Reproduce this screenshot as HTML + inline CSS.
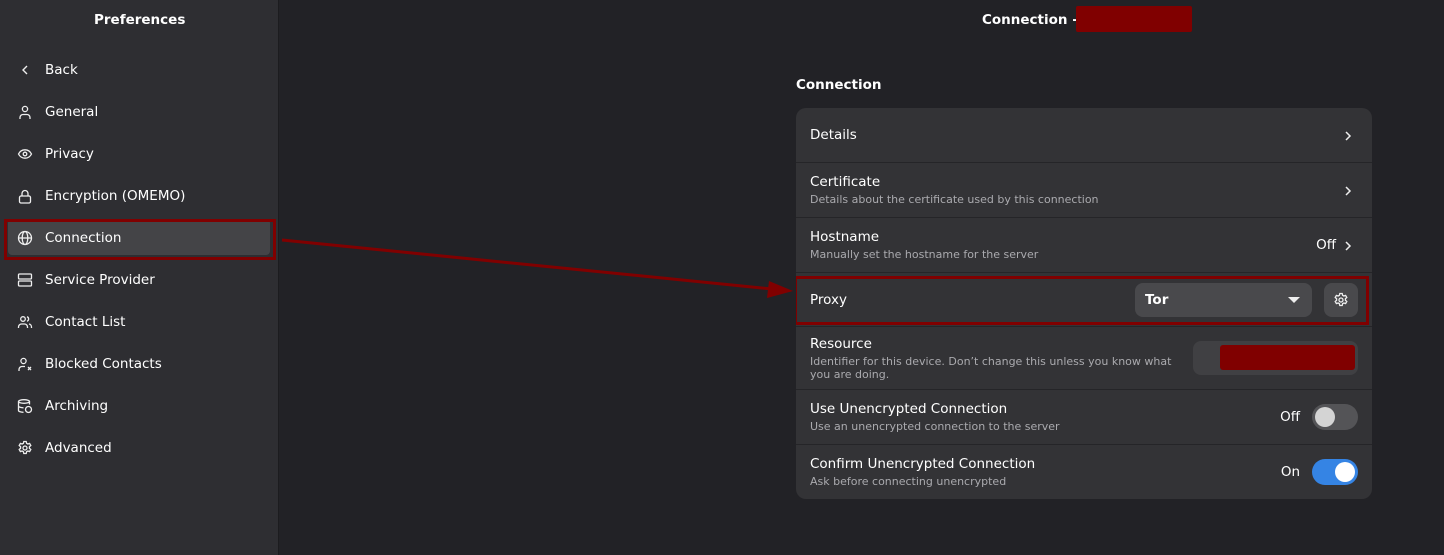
<!DOCTYPE html><html><head><style>
body{margin:0;width:1444px;height:555px;background:#222226;font-family:"DejaVu Sans","Liberation Sans",sans-serif;color:#fff;position:relative;overflow:hidden}
.side{position:absolute;left:0;top:0;width:278px;height:555px;background:#2e2e32;border-right:1px solid #1c1c1f}
.title{position:absolute;top:12px;font-weight:bold;font-size:13.5px}
.item{position:absolute;left:8px;width:262px;height:36px;font-size:13.5px;line-height:38px}
.item svg{position:absolute;left:9px;top:11px}
.item span{position:absolute;left:37px}
.card{position:absolute;left:796px;top:108px;width:576px;height:391px;background:#333336;border-radius:10px;overflow:hidden}
.row{position:absolute;left:0;width:576px;border-bottom:1px solid #252528}
.row .t{position:absolute;left:14px;font-size:13.5px}
.row .s{position:absolute;left:14px;font-size:11px;color:#aaaaae;line-height:13px}
.chev{position:absolute;right:16px}
.sw{position:absolute;right:14px;width:46px;height:26px;border-radius:13px}
.sw i{position:absolute;top:3px;width:20px;height:20px;border-radius:10px}
</style></head><body>
<div class="side">
<div class="title" style="left:94px">Preferences</div>
<div class="item" style="top:51px"><svg width="16" height="16" viewBox="0 0 16 16" fill="none" stroke="#eee" stroke-width="1.4"><path d="M10 4L6 8l4 4"/></svg><span>Back</span></div>
<div class="item" style="top:93px"><svg width="16" height="16" viewBox="0 0 16 16" fill="none" stroke="#eee" stroke-width="1.3"><circle cx="8" cy="5" r="2.6"/><path d="M3 15v-1.5a3 3 0 0 1 3-3h4a3 3 0 0 1 3 3V15"/></svg><span>General</span></div>
<div class="item" style="top:135px"><svg width="16" height="16" viewBox="0 0 16 16" fill="none" stroke="#eee" stroke-width="1.3"><path d="M1.5 8C3 5 5.5 3.8 8 3.8S13 5 14.5 8C13 11 10.5 12.2 8 12.2S3 11 1.5 8z"/><circle cx="8" cy="8" r="1.8"/></svg><span>Privacy</span></div>
<div class="item" style="top:177px"><svg width="16" height="16" viewBox="0 0 16 16" fill="none" stroke="#eee" stroke-width="1.3"><rect x="2.5" y="8" width="11" height="7" rx="1.5"/><path d="M5 8V5.5a3 3 0 0 1 6 0V8"/></svg><span>Encryption (OMEMO)</span></div>
<div class="item" style="top:219px;background:#444447;border-radius:4px"><svg width="16" height="16" viewBox="0 0 16 16" fill="none" stroke="#eee" stroke-width="1.3"><circle cx="8" cy="8" r="6.5"/><ellipse cx="8" cy="8" rx="2.8" ry="6.5"/><path d="M1.5 8h13"/></svg><span>Connection</span></div>
<div style="position:absolute;left:4px;top:219px;width:266px;height:35px;border:3px solid #800000"></div>
<div class="item" style="top:261px"><svg width="16" height="16" viewBox="0 0 16 16" fill="none" stroke="#eee" stroke-width="1.3"><rect x="1.5" y="2" width="13" height="5" rx="1"/><rect x="1.5" y="9" width="13" height="5" rx="1"/></svg><span>Service Provider</span></div>
<div class="item" style="top:303px"><svg width="16" height="16" viewBox="0 0 16 16" fill="none" stroke="#eee" stroke-width="1.3"><circle cx="6" cy="5" r="2.3"/><path d="M1.5 14v-1a3 3 0 0 1 3-3h3a3 3 0 0 1 3 3v1M10 2.8a2.3 2.3 0 0 1 0 4.4M12 10a3 3 0 0 1 2.5 3v1"/></svg><span>Contact List</span></div>
<div class="item" style="top:345px"><svg width="16" height="16" viewBox="0 0 16 16" fill="none" stroke="#eee" stroke-width="1.3"><circle cx="6.5" cy="5" r="2.6"/><path d="M2 15v-1.5a3 3 0 0 1 3-3h3M11 11l3 3M14 11l-3 3"/></svg><span>Blocked Contacts</span></div>
<div class="item" style="top:387px"><svg width="16" height="16" viewBox="0 0 16 16" fill="none" stroke="#eee" stroke-width="1.3"><ellipse cx="7" cy="3.5" rx="5.5" ry="1.8"/><path d="M1.5 3.5v9c0 1 2.5 1.8 5 1.8M12.5 3.5v3M1.5 8c0 1 2.5 1.8 5 1.8"/><circle cx="11.5" cy="11.5" r="3"/></svg><span>Archiving</span></div>
<div class="item" style="top:429px"><svg width="16" height="16" viewBox="0 0 16 16" fill="none" stroke="#eee" stroke-width="1.3"><path d="M6.8 1.5h2.4l.4 1.8 1.3.7 1.7-.6 1.2 2.1-1.4 1.2v1.6l1.4 1.2-1.2 2.1-1.7-.6-1.3.7-.4 1.8H6.8l-.4-1.8-1.3-.7-1.7.6-1.2-2.1 1.4-1.2V6.7L2.2 5.5l1.2-2.1 1.7.6 1.3-.7z"/><circle cx="8" cy="8" r="2"/></svg><span>Advanced</span></div>
</div>
<div class="title" style="left:982px">Connection -</div>
<div style="position:absolute;left:1076px;top:6px;width:116px;height:26px;background:#800000;border-radius:2px"></div>
<div class="title" style="left:796px;top:77px">Connection</div>
<div class="card">
<div class="row" style="top:0;height:54px"><div class="t" style="top:19px">Details</div><svg class="chev" style="top:20px" width="16" height="16" viewBox="0 0 16 16" fill="none" stroke="#eee" stroke-width="1.5"><path d="M6 4l4 4-4 4"/></svg></div>
<div class="row" style="top:55px;height:54px"><div class="t" style="top:11px">Certificate</div><div class="s" style="top:30px">Details about the certificate used by this connection</div><svg class="chev" style="top:20px" width="16" height="16" viewBox="0 0 16 16" fill="none" stroke="#eee" stroke-width="1.5"><path d="M6 4l4 4-4 4"/></svg></div>
<div class="row" style="top:110px;height:54px"><div class="t" style="top:11px">Hostname</div><div class="s" style="top:30px">Manually set the hostname for the server</div><div style="position:absolute;right:36px;top:19px;font-size:13.5px">Off</div><svg class="chev" style="top:20px" width="16" height="16" viewBox="0 0 16 16" fill="none" stroke="#eee" stroke-width="1.5"><path d="M6 4l4 4-4 4"/></svg></div>
<div class="row" style="top:165px;height:53px"><div class="t" style="top:19px">Proxy</div>
<div style="position:absolute;left:339px;top:10px;width:177px;height:34px;background:#49494c;border-radius:8px"><b style="position:absolute;left:10px;top:9px;font-size:13.5px">Tor</b><div style="position:absolute;right:12px;top:14px;border-left:6px solid transparent;border-right:6px solid transparent;border-top:6px solid #eee"></div></div>
<div style="position:absolute;left:528px;top:10px;width:34px;height:34px;background:#49494c;border-radius:8px"><svg style="position:absolute;left:9px;top:9px" width="16" height="16" viewBox="0 0 16 16" fill="none" stroke="#eee" stroke-width="1.3"><path d="M6.8 1.5h2.4l.4 1.8 1.3.7 1.7-.6 1.2 2.1-1.4 1.2v1.6l1.4 1.2-1.2 2.1-1.7-.6-1.3.7-.4 1.8H6.8l-.4-1.8-1.3-.7-1.7.6-1.2-2.1 1.4-1.2V6.7L2.2 5.5l1.2-2.1 1.7.6 1.3-.7z"/><circle cx="8" cy="8" r="2"/></svg></div>
<div style="position:absolute;left:-2px;top:3px;width:569px;height:43px;border:3px solid #800000"></div></div>
<div class="row" style="top:219px;height:62px"><div class="t" style="top:9px">Resource</div><div class="s" style="top:28px;width:380px">Identifier for this device. Don’t change this unless you know what you are doing.</div>
<div style="position:absolute;left:397px;top:14px;width:165px;height:34px;background:#404043;border-radius:8px"><div style="position:absolute;left:27px;top:4px;width:135px;height:25px;background:#800000;border-radius:3px"></div></div></div>
<div class="row" style="top:282px;height:54px"><div class="t" style="top:11px">Use Unencrypted Connection</div><div class="s" style="top:30px">Use an unencrypted connection to the server</div><div style="position:absolute;right:72px;top:19px;font-size:13.5px">Off</div><div class="sw" style="top:14px;background:#545457"><i style="left:3px;background:#d4d4d4"></i></div></div>
<div class="row" style="top:337px;height:54px;border:0"><div class="t" style="top:11px">Confirm Unencrypted Connection</div><div class="s" style="top:30px">Ask before connecting unencrypted</div><div style="position:absolute;right:72px;top:19px;font-size:13.5px">On</div><div class="sw" style="top:14px;background:#3584e4"><i style="left:23px;background:#fff"></i></div></div>
</div>
<svg style="position:absolute;left:0;top:0" width="1444" height="555"><line x1="282" y1="240" x2="772" y2="289" stroke="#800000" stroke-width="3"/><path d="M793 291L769 281l-2 17z" fill="#800000"/></svg>
</body></html>
